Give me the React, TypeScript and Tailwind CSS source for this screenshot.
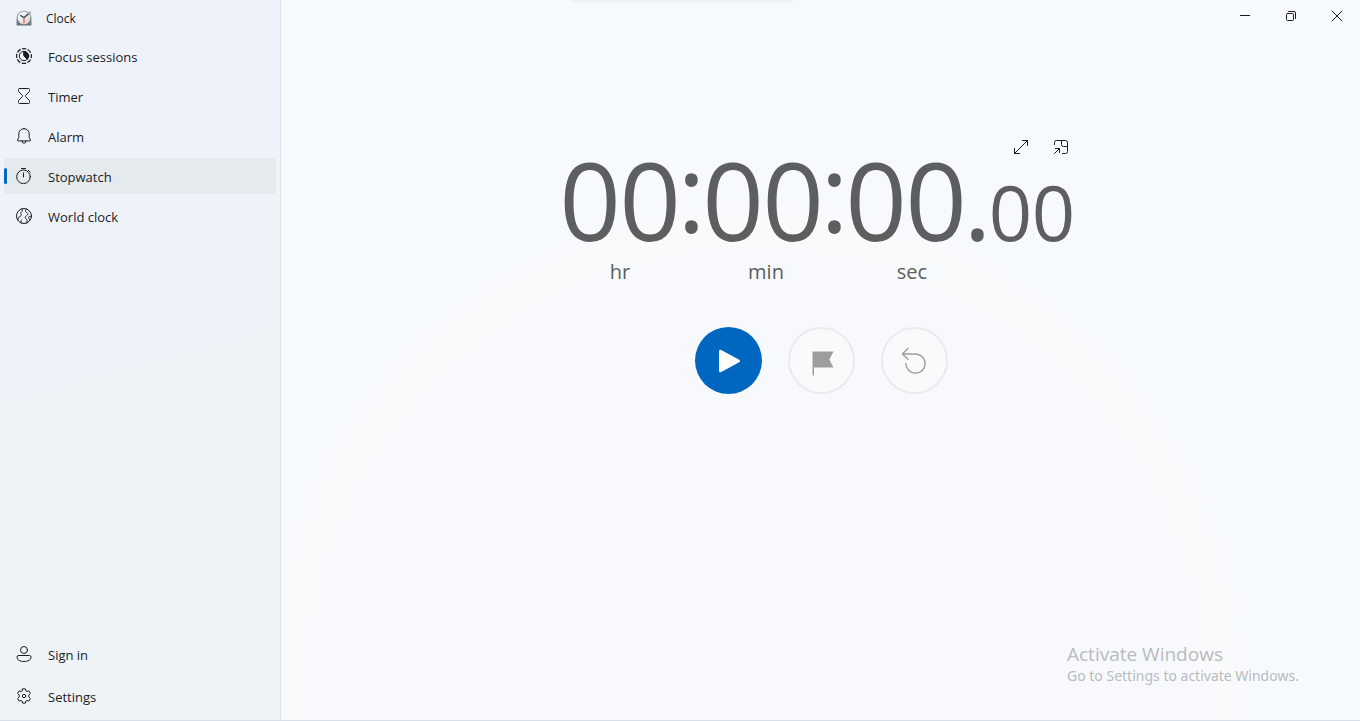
import type { ReactNode } from "react";

const line = {
  fill: "none",
  stroke: "currentColor",
  strokeWidth: 1,
  strokeLinecap: "round" as const,
  strokeLinejoin: "round" as const,
};

function Icon({ children, className = "size-4" }: { children: ReactNode; className?: string }) {
  return (
    <svg viewBox="0 0 16 16" className={className} aria-hidden="true" {...line}>
      {children}
    </svg>
  );
}

function AppLogo() {
  return (
    <svg viewBox="0 0 16 16" className="size-4" aria-hidden="true">
      <defs>
        <linearGradient id="case" x1="0" y1="0" x2="0" y2="1">
          <stop offset="0" stopColor="#a9b0b6" />
          <stop offset="1" stopColor="#66717b" />
        </linearGradient>
        <linearGradient id="face" x1="0" y1="0" x2="1" y2="1">
          <stop offset="0" stopColor="#ffffff" />
          <stop offset="1" stopColor="#cfd3d6" />
        </linearGradient>
      </defs>
      <path d="M.5 8A7.3 7.3 0 0 1 8 .8c2 0 3.500.6 4.600 1.400L14.200 1.200l1 1-1 1.800c.9 1.200 1.300 2.500 1.300 4V14.500a1 1 0 0 1-1 1h-13a1 1 0 0 1-1-1z" fill="url(#case)" />
      <circle cx="8" cy="8" r="6.300" fill="url(#face)" />
      <path d="M8 8.500v5" stroke="#ee8460" strokeWidth="1.800" />
      <path d="M4.300 5.300L8 7.800l4.500-4" fill="none" stroke="#34393e" strokeWidth="1.300" />
    </svg>
  );
}

const icons = {
  focus: (
    <Icon>
      <circle cx="8" cy="8" r="7.400" strokeWidth="1.200" strokeDasharray="4.310 1.500" strokeDashoffset="2.155" strokeLinecap="butt" />
      <circle cx="8" cy="8" r="4.700" strokeWidth="1" />
      <path d="M8 3.500a4.500 4.500 0 0 1 3.200 7.700L8 8z" fill="currentColor" />
    </Icon>
  ),
  timer: (
    <Icon>
      <path d="M3.500.5h9a1 1 0 0 1 1 1v1.300c0 .5-.2.900-.5 1.200L9.700 7.200c-.5.500-.5 1.100 0 1.600L13 12c.3.300.5.700.5 1.200v1.300a1 1 0 0 1-1 1h-9a1 1 0 0 1-1-1v-1.300c0-.5.2-.9.500-1.200l3.300-3.200c.5-.5.5-1.100 0-1.600L3 4c-.3-.3-.5-.7-.5-1.200V1.500a1 1 0 0 1 1-1z" />
    </Icon>
  ),
  alarm: (
    <Icon>
      <path d="M8 .6a5.200 5.200 0 0 0-5.200 5.200v3.700L1.500 12.300c-.1.300 0 .6.400.6h12.200c.4 0 .5-.3.400-.6l-1.300-2.800V5.800A5.200 5.200 0 0 0 8 .6z" />
      <path d="M6 13.100a2 2.200 0 0 0 4 0" />
    </Icon>
  ),
  stopwatch: (
    <Icon>
      <circle cx="7.500" cy="8.800" r="6.800" />
      <path d="M7.500 5v4M5.500.5h4M12.300 2.300l1.800 1.700" />
    </Icon>
  ),
  world: (
    <Icon>
      <circle cx="8" cy="8" r="7.500" />
      <path d="M6 .9c.6 1.300.3 2.500-.7 3.200s-.7 1.600-.2 2.400-.3 1.600-1.300 2-1.300 1.700-1.900 3.300M10.300.9C9.300 2.300 9.200 3.200 10 4s2 1 1.800 2.100-1.600 1.600-2.300 2.600.2 2 1.100 2.700.4 2.500.1 3.600M15.300 8.800c-1.500-.8-2.400-.5-2.600.5s.5 1.700 1 2.600M5.200 14.900c.1-1.300-.5-1.900.2-2.900" />
    </Icon>
  ),
  person: (
    <Icon>
      <circle cx="8" cy="4" r="3.500" />
      <path d="M2.500 9.500h11a1.500 1.500 0 0 1 1.500 1.500c0 3-3 4.500-7 4.500S1 14 1 11a1.500 1.500 0 0 1 1.500-1.500z" />
    </Icon>
  ),
  settings: (
    <Icon>
      <circle cx="8" cy="8" r="1.700" />
      <path d="M6.600.9h2.800l.5 2 1 .6 2-.6 1.500 2.500-1.500 1.400c-.2.800-.2 1.600 0 2.400l1.500 1.400-1.500 2.500-2-.6-1 .6-.5 2H6.600l-.5-2-1-.6-2 .6-1.500-2.500 1.500-1.400c.2-.8.200-1.600 0-2.400L1.600 5.400l1.500-2.500 2 .6 1-.6z" />
    </Icon>
  ),
};

type NavEntry = { label: string; icon: ReactNode; active?: boolean };

const pages: NavEntry[] = [
  { label: "Focus sessions", icon: icons.focus },
  { label: "Timer", icon: icons.timer },
  { label: "Alarm", icon: icons.alarm },
  { label: "Stopwatch", icon: icons.stopwatch, active: true },
  { label: "World clock", icon: icons.world },
];

const account: NavEntry[] = [
  { label: "Sign in", icon: icons.person },
  { label: "Settings", icon: icons.settings },
];

function NavButton({ label, icon, active }: NavEntry) {
  return (
    <button
      type="button"
      aria-current={active ? "page" : undefined}
      className={
        active
          ? "flex h-9 w-full items-center rounded bg-[#e5eaee] text-left"
          : "flex h-9 w-full items-center rounded text-left"
      }
    >
      <span className={active ? "h-4 w-[3px] rounded-full bg-[#0067c0]" : "h-4 w-[3px]"} />
      <span className="ml-[9px]">{icon}</span>
      <span className="ml-4 pt-0.5 text-[13px] leading-5">{label}</span>
    </button>
  );
}

function Digits({ value, small }: { value: string; small?: boolean }) {
  return (
    <span className="flex">
      {value.split("").map((d, i) => (
        <span
          key={i}
          className={
            small
              ? "flex w-[43px] justify-center text-[76px] leading-[60px]"
              : "flex w-[60px] justify-center text-[108px] leading-[80px]"
          }
        >
          {d}
        </span>
      ))}
    </span>
  );
}

function Colon() {
  return (
    <span className="flex w-[23px] justify-center self-start text-[108px] leading-[64px]">:</span>
  );
}

export default function App() {
  return (
    <div className="relative flex min-h-screen border-b border-[#d6dfe8] bg-[#f6fafd] font-['Open_Sans','Noto_Sans',sans-serif] text-[#1b1c1e]">
      <aside className="flex w-[281px] shrink-0 flex-col border-r border-[#dfe3e9] bg-linear-[165deg,#eef2fb_0%,#eef3fb_25%,#eef3f7_65%,#eef3f7_100%]">
        <header className="flex h-[38px] items-center gap-3.5 px-4 pb-0.5">
          <AppLogo />
          <h1 className="pt-0.5 text-xs leading-4">Clock</h1>
        </header>
        <nav aria-label="Pages" className="flex grow flex-col gap-1 px-1">
          {pages.map((p) => (
            <NavButton key={p.label} {...p} />
          ))}
        </nav>
        <div className="flex flex-col gap-1.5 px-1 pb-1.5">
          {account.map((p) => (
            <NavButton key={p.label} {...p} />
          ))}
        </div>
      </aside>

      <main className="relative flex grow flex-col overflow-hidden bg-[radial-gradient(ellipse_46%_70%_at_44%_98%,#f8f9fd_0%,#f8f9fd_87%,#f9fafc_91%,#f9fafc_96%,#f6fafd_102%)]">
        <div className="pointer-events-none absolute -top-1 left-[290px] h-1 w-[222px] shadow-[0_0_4px_rgba(0,0,0,0.12)]" />
        <div className="flex h-8 justify-end">
          <button type="button" aria-label="Minimize" className="flex w-[46px] items-center justify-center">
            <Icon>
              <path d="M3 7.500h10" strokeLinecap="butt" />
            </Icon>
          </button>
          <button type="button" aria-label="Restore" className="flex w-[46px] items-center justify-center">
            <Icon>
              <rect x="3.500" y="5.500" width="7" height="7" rx="1" />
              <path d="M5.500 3.500h5.500a1.500 1.500 0 0 1 1.500 1.500v5.500" />
            </Icon>
          </button>
          <button type="button" aria-label="Close" className="flex w-[46px] items-center justify-center">
            <Icon>
              <path d="M3 3l10 10M13 3L3 13" />
            </Icon>
          </button>
        </div>

        <section aria-label="Stopwatch" className="mx-auto flex w-[521px] flex-col pt-[103px] text-[#5d5e60]">
          <div className="flex justify-end text-[#1b1c1e]">
            <button type="button" aria-label="Expand" className="flex h-6 w-10 items-center justify-center">
              <Icon>
                <path d="M1.500 14.500l13-13M9.500 1.500h5v5M1.500 9.500v5h5" />
              </Icon>
            </button>
            <button type="button" aria-label="Keep on top" className="flex h-6 w-10 items-center justify-center">
              <Icon>
                <path d="M1.500 5.500v-2a2 2 0 0 1 2-2h9a2 2 0 0 1 2 2v9a2 2 0 0 1-2 2h-3M8.500 1.500v4a2 2 0 0 0 2 2h4M1.500 14.500l5-5M2.500 9.500h4v4" />
              </Icon>
            </button>
          </div>
          <div role="timer" className="mt-px flex h-20 items-baseline">
            <Digits value="00" />
            <Colon />
            <Digits value="00" />
            <Colon />
            <Digits value="00" />
            <span className="flex w-[23px] justify-center text-[108px] leading-[80px]">.</span>
            <Digits value="00" small />
          </div>
          <div className="mt-[18px] flex gap-[26px] text-center text-xl leading-7">
            <span className="w-[120px]">hr</span>
            <span className="w-[120px]">min</span>
            <span className="w-[120px]">sec</span>
          </div>
          <div className="mt-[41px] flex justify-center gap-[26px] pl-0.5">
            <button type="button" aria-label="Start" className="flex size-[67px] items-center justify-center rounded-full bg-[#0067c0]">
              <svg viewBox="0 0 24 24" className="size-6" aria-hidden="true">
                <path d="M3.500 2.200v19.600L21.500 12z" fill="#fff" stroke="#fff" strokeWidth="3" strokeLinejoin="round" />
              </svg>
            </button>
            <button type="button" aria-label="Lap" disabled className="flex size-[67px] items-center justify-center rounded-full border-2 border-[#ebebed] bg-[#f9fafc]">
              <svg viewBox="0 0 24 24" className="size-6 overflow-visible" aria-hidden="true">
                <path d="M2.500 2.500H23.500L19.300 10.500l4.200 8H4v8H2.500z" fill="#9d9d9e" />
              </svg>
            </button>
            <button type="button" aria-label="Reset" disabled className="flex size-[67px] items-center justify-center rounded-full border-2 border-[#ebebed] bg-[#f9fafc] text-[#9d9d9e]">
              <svg viewBox="0 0 24 24" className="size-6 overflow-visible" aria-hidden="true" {...line} strokeWidth={1.400}>
                <path d="M5-.5L-.6 5 5 10.300M-.4 5h12.900a9.600 9.600 0 1 1-9.600 9.400" />
              </svg>
            </button>
          </div>
        </section>
      </main>

      <div className="pointer-events-none absolute right-[57px] bottom-[34px] w-[236px] whitespace-nowrap text-[#b9bbbd]">
        <p className="text-[19px] leading-6">Activate Windows</p>
        <p className="font-['Noto_Sans',sans-serif] text-sm leading-5">Go to Settings to activate Windows.</p>
      </div>
    </div>
  );
}
